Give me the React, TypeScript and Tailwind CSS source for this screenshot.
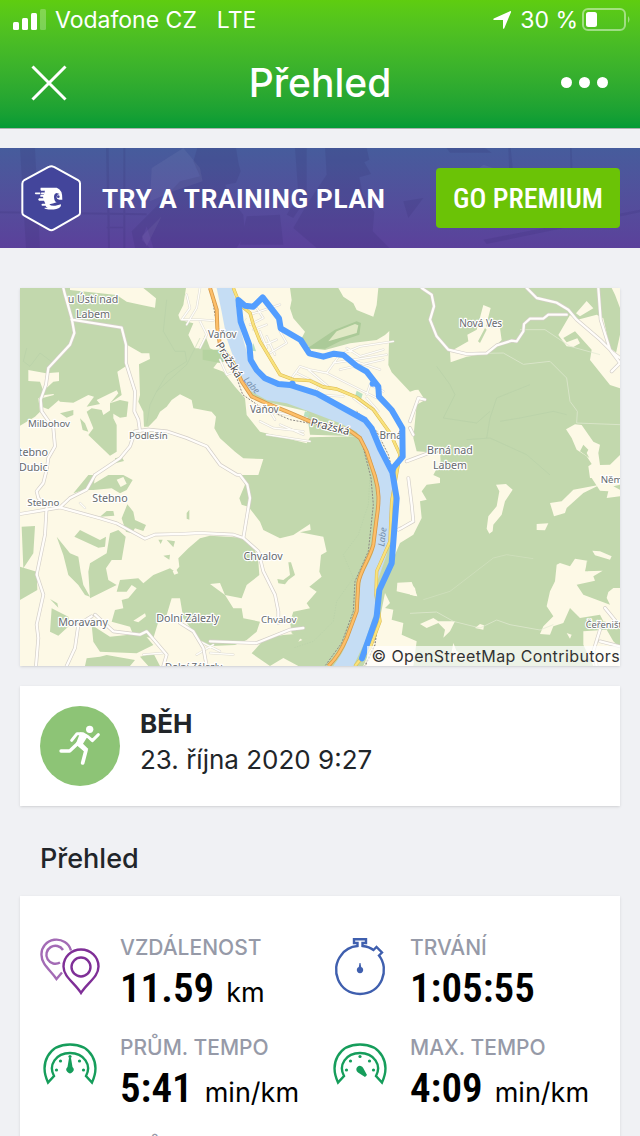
import type { ReactNode } from "react";

export default function App() {
  return (
    <div className="h-screen overflow-hidden bg-[#f0f1f4] font-['Inter',sans-serif] text-[#212529]">
      <Header></Header>
      <main className="pt-[19px]">
        <PremiumBanner></PremiumBanner>
        <div className="px-5 pt-10">
          <RouteMap></RouteMap>
          <ActivityInfo></ActivityInfo>
          <h2 className="px-5 pt-[34px] pb-[18px] text-[27px] leading-[38px] font-medium">Přehled</h2>
          <Stats></Stats>
        </div>
      </main>
    </div>
  );
}

function Header() {
  return (
    <header className="h-[129px] border-b border-[#a9b3ad] bg-linear-to-b from-[#5fcd10] to-[#039b35] text-white">
      <div className="flex h-10 items-center justify-between pr-2 pl-3 text-[23px] leading-10">
        <div className="flex items-center">
          <SignalIcon></SignalIcon>
          <span className="ml-2">Vodafone CZ</span>
          <span className="ml-5">LTE</span>
        </div>
        <div className="flex items-center">
          <LocationIcon></LocationIcon>
          <span className="ml-2">30 %</span>
          <BatteryIcon></BatteryIcon>
        </div>
      </div>
      <div className="grid h-[86px] grid-cols-[1fr_auto_1fr] items-center px-7">
        <button type="button" aria-label="Zavřít" className="justify-self-start">
          <svg width="42" height="42" viewBox="0 0 42 42" fill="none" stroke="white" strokeWidth="3">
            <path d="M4.500 4.500 37.500 37.500M37.500 4.500 4.500 37.500" />
          </svg>
        </button>
        <h1 className="text-[39px] leading-[48px] font-medium">Přehled</h1>
        <button type="button" aria-label="Další možnosti" className="justify-self-end">
          <svg width="54" height="42" viewBox="0 0 54 42" fill="white">
            <circle cx="8.500" cy="20.500" r="5.500" />
            <circle cx="26.500" cy="20.500" r="5.500" />
            <circle cx="44.500" cy="20.500" r="5.500" />
          </svg>
        </button>
      </div>
    </header>
  );
}

function SignalIcon() {
  return (
    <svg width="35" height="22" viewBox="0 0 35 22" fill="white">
      <rect x="1" y="13" width="6" height="8" rx="1.500" />
      <rect x="10" y="9" width="6" height="12" rx="1.500" />
      <rect x="19" y="4" width="6" height="17" rx="1.500" />
      <rect x="28" y="0" width="6" height="21" rx="1.500" opacity="0.250" />
    </svg>
  );
}

function LocationIcon() {
  return (
    <svg width="20" height="20" viewBox="0 0 20 20" fill="white">
      <path d="M18 1.200Q19.400 .8 19 2.200L12.300 18.200Q11.600 19.400 11 18.200V10H2.200Q.4 9.600 1.800 8.500Z" />
    </svg>
  );
}

function BatteryIcon() {
  return (
    <svg width="50" height="24" viewBox="0 0 50 24" className="ml-1">
      <rect x="1" y="1" width="42" height="21" rx="5" fill="none" stroke="white" strokeWidth="2" opacity="0.450" />
      <rect x="4" y="4" width="11" height="15" rx="2.500" fill="white" />
      <path d="M46 8v7q3-3.500 0-7Z" fill="white" opacity="0.450" />
    </svg>
  );
}

function PremiumBanner() {
  return (
    <section className="relative flex h-[100px] items-center justify-between overflow-hidden bg-linear-to-b from-[#465c9c] to-[#5b419b] px-5">
      <BannerBackground></BannerBackground>
      <div className="relative flex items-center gap-5">
        <HelmetLogo></HelmetLogo>
        <p className="pt-0.5 font-['Roboto',sans-serif] text-[26px] leading-8 font-bold tracking-wide whitespace-nowrap text-white">
          TRY A TRAINING PLAN
        </p>
      </div>
      <button
        type="button"
        className="relative h-[60px] w-[184px] rounded bg-[#6bc306] pt-0.5 font-['Roboto_Condensed','Roboto',sans-serif] text-[28px] leading-8 font-medium whitespace-nowrap text-white"
      >
        GO PREMIUM
      </button>
    </section>
  );
}

// faint runners and window frames behind the banner text
function BannerBackground() {
  return (
    <svg
      className="absolute inset-0 h-full w-full"
      viewBox="0 0 1920 300"
      preserveAspectRatio="none"
      fill="#28205f"
      aria-hidden="true"
    >
      <g opacity="0.120">
        <path d="M60 0h45l15 300H78ZM318 0h8l4 300h-6ZM370 0h6v300h-6Z" />
        <path d="M0 190 440 196V202L0 196ZM320 236h50v5h-50Z" />
        <path d="M592 0H708L716 48 722 70 708 104 676 110 690 150 730 200 735 260 710 300H460L440 235 425 275 450 300H405L395 250 470 175 540 100 600 85 580 40Z" />
        <path d="M740 205 840 200 850 290H720ZM885 0h35v150l-40 60-20-10 35-60Z" />
        <path d="M975 0h125l8 35-15 8 20 35-35 10 10 50 35 55-5 57 50 50H950l-70-60 40-70 60-90Z" />
        <path d="M1340 0h115l20 14h-125ZM1525 0h7l10 100-5 90h-5ZM1710 0h5l8 240h-7ZM1210 160l60-10-45 60ZM1450 275l470-90v8l-460 95Z" />
      </g>
      <g opacity="0.050" fill="#ffffff">
        <path d="M455 60 550 0 600 60 608 100 520 130 450 160ZM425 265l60-60-45 90ZM1320 150l130-100 60 20-10 70Z" />
      </g>
    </svg>
  );
}

function HelmetLogo() {
  return (
    <svg width="62" height="70" viewBox="60 68 186 210" fill="none">
      <path
        d="M146 80Q154 75 162 80L234 119Q240 123 240 129V218Q240 223 234 226L162 267Q154 272 146 267L73 226Q67 223 67 217V130Q67 123 73 119Z"
        fill="#43459b"
        stroke="white"
        strokeWidth="6"
      />
      <path
        fill="white"
        d="M122 142H170Q188 147 187 178H178Q169 176 170 169 171 162 179 161L170 158Q162 160 162 170 163 184 170 186 158 191 148 192 153 198 166 196L183 192Q184 203 169 206 153 209 138 206 131 205 134 202H143Q136 199 137 196H126Q122 191 128 190H136L132 181H117Q112 178 117 174H130L129 169H121V163H131L135 151H123Q120 147 122 142Z"
      />
      <path d="M107 159H119M125 159h6" stroke="white" strokeWidth="5" strokeLinecap="round" />
      <circle cx="175" cy="169" r="4" fill="#43459b" />
    </svg>
  );
}

const forest = "#c2d8ad";
const field = "#fdf9e6";

const route =
  "M456 1111 500 986 508 906 545 826 550 761 560 631 547 553 510 481 485 421 465 396 320 316 240 291 205 288 165 271 140 246 122 216 118 171 92 101 85 36 105 53 130 56 158 28 207 91 212 121 272 156 298 196 340 206 372 197 400 201 440 234 470 251 505 296 507 326 545 366 577 421 578 506 550 539 547 553";

const orangeRoad =
  "M570 0 590 65 592 120 600 170 640 225 665 280 695 325 740 346 800 370 870 400 985 425 1020 450 1040 490 1065 565C1078 610 1078 640 1070 690L1060 770C1050 810 1020 850 1015 885L1010 970 980 1050C965 1085 945 1115 925 1134";

const yellowRoad =
  "M640 0 660 50 690 75 700 110 720 160 780 260 820 275 870 278 910 297 950 303 1010 328 1060 365 1110 435 1140 500 1115 640 1110 760 1070 850 1068 920 1080 1000 1050 1080 1005 1134";

// every road is drawn twice, a wide casing and a narrower white core
const roads = [
  "M130 0 135 20 155 90 163 135 150 170 85 240 78 290 62 335 65 370 100 420 105 475 85 510 80 545 70 585 50 610 55 630 80 655 75 740 50 860 70 920 50 1010 55 1050 48 1134",
  "M155 95 305 119 318 170 318 225 345 310 343 370 355 395 360 430M225 561 300 511 330 475 345 430 385 425 440 430 500 450 560 475 600 530 650 560 660 561 682 590 690 630 670 750",
  "M0 678 120 658 240 691 290 706 375 752 405 740 480 738 540 735 640 740 670 750 715 790 730 850 765 920 775 970 775 1005",
  "M120 658 150 630 200 605 225 561M225 980 280 1030 360 1040 380 1030 440 1100 430 1134M215 985 175 1010 165 1080 140 1134M480 1005 520 1030 550 1080 560 1134M570 1060 710 1065 810 1025 850 1020",
  "M1205 0 1235 20 1242 55 1230 95 1250 145 1285 185 1340 198 1400 196 1430 172 1475 158 1490 160 1510 130 1512 108 1530 92 1570 92 1585 80 1640 80",
  "M1520 0 1550 30 1610 44 1645 65 1670 95 1740 155 1780 195 1800 210M1735 0 1742 95 1770 185 1800 225 1775 250",
  "M1160 520 1250 486M1165 570 1175 650 1180 700 1145 720 1135 725M1170 400 1195 330 1215 335M1180 440 1170 420",
  "M1755 960 1800 1015M1740 1025 1720 1090 1730 1134M1740 1060 1800 1075",
];

const streets =
  "M1120 160 1020 175 960 200 920 255 870 245 840 235 815 270M940 225 1100 200M960 245 1090 215M920 255 1010 300 1070 330M865 245 930 300M830 255 900 290 880 320 970 325M1000 330 1040 360M1040 330 1075 370M750 195 800 165 780 130M735 170 770 155M690 110 730 90 710 60M690 80 780 50M700 125 740 110M740 145 765 200M720 130 740 180M500 20 510 60 485 95 540 95 580 98M540 0 530 60 500 110M540 100 560 140 540 180M720 400 760 420 850 430M740 440 870 460M765 395 750 370 860 390M780 410 850 440M600 215 620 260 650 250M980 180 1020 205 1090 185M990 215 1080 245M1040 320 1050 290 1090 310M540 1060 600 1090M530 1100 580 1070M570 1095 640 1100M180 645 195 660M370 1100 430 1095";

function RouteMap() {
  return (
    <figure className="relative bg-white shadow">
      <svg
        viewBox="0 0 1800 1134"
        className="block w-full"
        role="img"
        aria-label="Mapa trasy"
        fontFamily="'Noto Sans', sans-serif"
      >
        <rect width="1800" height="1134" fill={forest} />
        <Fields></Fields>
        <Woods></Woods>

        <g fill="none" stroke="#b4cda6" strokeWidth="2" opacity="0.700">
          <path d="M440 35 430 130 465 190 495 190 500 220 440 260 410 310 390 350 380 410M20 180 10 220 30 235 60 195 100 225M540 150 500 230 410 310" />
          <path d="M1050 560 1045 650 1015 740 970 800 1000 870 950 940 940 1000 880 1060 820 1080" strokeDasharray="4 4" />
          <path d="M1250 235 1290 290 1305 320 1270 390 1370 405 1410 370M1400 450 1410 390 1430 330 1530 290M1440 400 1500 390 1600 370 1640 380M1340 455 1410 450 1520 500 1590 561" />
        </g>
        <g fill="none" stroke="#e3ebd4" strokeWidth="3" opacity="0.700">
          <path d="M1340 197 1450 195 1510 229 1590 220 1640 270 1650 340 1672 370 1670 405 1800 410M1500 125 1575 125 1650 175 1740 200" />
          <path d="M1170 976 1250 972 1300 1000 1380 1020 1430 996 1470 1010 1560 1026 1600 1010M680 90 650 130 640 170" />
          <path d="M1210 935 1290 910 1420 810 1460 800 1540 812" opacity="0.500" />
        </g>

        <path d="M860 182 945 125 1010 100 1023 105 1018 140 960 160 915 182Z" fill="#abca98" />
        <path d="M925 160 950 130 1005 108 1015 112 1010 135Z" fill="#dfe8c4" />
        <path d="M548 185 600 185 625 215 600 225 548 215Z" fill="#b5d3a0" />
        <path d="M1010 308 1028 318 1022 338 1005 325ZM700 165l8 25-12-2ZM855 370l14 5-8 20-12-3Z" fill="#b7e0c0" />

        <g fill="none" strokeLinejoin="round" strokeLinecap="round">
          <path d={streets} stroke="#dedbd2" strokeWidth="7" />
          <path d={streets} stroke="#fffefa" strokeWidth="4" />
          {roads.map((d) => (
            <path key={d} d={d} stroke="#d4cfc8" strokeWidth="11" />
          ))}
          {roads.map((d) => (
            <path key={d} d={d} stroke="#fffdfa" strokeWidth="7" />
          ))}
        </g>

        <path
          d="M590 0 605 71 620 151 645 221 665 281 695 311 740 336 800 346 870 371 960 406 1010 431 1035 471 1070 561C1082 620 1078 650 1075 691L1060 791C1050 825 1028 850 1022 875L1015 961 985 1051C975 1085 955 1115 940 1134H1000L1035 1061 1068 961 1068 891 1100 801 1115 711 1122 611 1120 561 1080 471 1040 391 890 316 810 291 740 276 700 241 680 191 655 101 648 51 640 0Z"
          fill="#c5ddf4"
        />
        <g fill="none" strokeLinejoin="round">
          <path
            d="M572 0 588 100 600 180 640 240 668 320 720 356 810 395 920 415 995 435 1025 460 1053 570 1060 650 1045 790 1005 880 1000 970 965 1065 915 1134"
            stroke="#8d8984"
            strokeWidth="3"
            strokeDasharray="6 4"
          />
          <path d="M1010 370 1070 430 1105 500 1120 560" stroke="#8d8984" strokeWidth="3" strokeDasharray="6 4" />
          <path d="M1073 1000 1065 1070 1035 1134" stroke="#8d8984" strokeWidth="4" strokeDasharray="6 4" />
          <path d={orangeRoad} stroke="#d69a4a" strokeWidth="12" />
          <path d={orangeRoad} stroke="#fdbf69" strokeWidth="7" />
          <path d={yellowRoad} stroke="#dbb94f" strokeWidth="10" />
          <path d={yellowRoad} stroke="#f9e27d" strokeWidth="7" />
        </g>

        <g
          fill="#666a6d"
          stroke="#ffffff"
          strokeWidth="7"
          strokeLinejoin="round"
          paintOrder="stroke"
          fontSize="32"
          textAnchor="middle"
        >
          <text x="219" y="44">u Ústí nad</text>
          <text x="219" y="90">Labem</text>
          <text x="87" y="418" fontSize="29">Milbohov</text>
          <text x="385" y="452" fontSize="29">Podlešín</text>
          <text x="40" y="505">tebno</text>
          <text x="40" y="550">Dubic</text>
          <text x="70" y="655" fontSize="29">Stebno</text>
          <text x="270" y="641">Stebno</text>
          <text x="189" y="1013">Moravany</text>
          <text x="503" y="1003">Dolní Zálezly</text>
          <text x="521" y="1145" fontSize="29">Dolní Zálezly</text>
          <text x="729" y="815">Chvalov</text>
          <text x="776" y="1004" fontSize="29">Chvalov</text>
          <text x="607" y="150" fontSize="30">Vaňov</text>
          <text x="733" y="375" fontSize="30">Vaňov</text>
          <text x="1382" y="116" fontSize="30">Nová Ves</text>
          <text x="1290" y="497">Brná nad</text>
          <text x="1290" y="542">Labem</text>
          <text x="1112" y="452" fontSize="30">Brná</text>
          <text x="1742" y="584" textAnchor="start" fontSize="29">Něm</text>
          <text x="1697" y="1021" textAnchor="start" fontSize="28">Čeřeništ</text>
          <g fill="#4f4f4f" fontSize="33">
            <text transform="translate(618 222) rotate(58)">Pražská</text>
            <text transform="translate(928 427) rotate(14)">Pražská</text>
          </g>
          <g fill="#7790ae" stroke="none" fontSize="27" fontStyle="italic">
            <text transform="translate(688 298) rotate(48)">Labe</text>
            <text transform="translate(1096 748) rotate(-83)">Labe</text>
          </g>
        </g>

        <g transform="translate(570 0)">
          <path
            d={route}
            fill="none"
            stroke="#539eff"
            strokeWidth="18"
            strokeLinejoin="round"
            strokeLinecap="round"
          />
          <circle cx="247" cy="288" r="10" fill="#539eff" />
          <circle cx="488" cy="287" r="9" fill="#539eff" />
        </g>
      </svg>
      <figcaption className="absolute right-0 bottom-0 bg-white/70 pl-1 text-base leading-5 tracking-wide whitespace-nowrap text-[#333333]">
        © OpenStreetMap Contributors
      </figcaption>
    </figure>
  );
}

function Fields() {
  return (
    <g fill={field}>
      <path d="M150 0H370L408 31 405 59 365 51 320 41 290 21 150 6Z" />
      <path d="M25 246 78 256 117 253V279L100 281 70 309 60 281 25 279Z" />
      <path d="M0 413 45 386 60 371 55 331 75 321 100 318 120 341 160 344 205 321 222 326 200 356 240 348 230 336 290 307 295 316 270 346 305 321 292 251 315 236 318 169 365 196 388 196 390 213 357 229 360 321 355 341 370 371 372 416 385 416 410 391 420 371 440 356 455 336 480 319 515 336 520 361 575 371 588 386 583 421 600 451 645 491 670 511 730 513 715 561H665L675 590 658 631 665 650 685 656 720 701 730 726 780 751 820 741 870 708 872 726 840 733 910 746 920 791 903 801 898 851 905 866 868 896 890 911 860 946 870 961 820 971 810 1001 815 1036 870 1070 830 1080 835 1110 870 1134H0Z" />
      <path d="M498 0H810L815 36 810 61 820 91 855 131 845 151 870 181 915 186 990 166 1070 156 1095 141 1108 129 1105 231 1115 253 1170 311 1185 306 1195 305 1215 336 1190 350 1180 450 1190 490 1260 495 1262 520 1240 561 1260 570V585L1220 590 1205 610 1220 635 1200 640 1205 690 1180 740 1140 765 1125 800 1120 640 1115 561 1080 471 1040 391 890 316 740 276 700 241 690 330 860 370 870 440 1010 445 870 448 860 466 720 431 680 381 675 331 645 296 610 251 580 240 610 200 570 181 555 141 540 181 525 181 505 141 520 106 480 96 475 81 490 51Z" />
      <path d="M955 0H1075L1070 51 1060 86 1010 66 1000 46 970 26Z" />
      <path d="M1290 191 1345 160 1342 140 1370 125 1390 51 1412 60 1398 115 1440 121 1445 156 1405 196 1340 206 1292 223Z" />
      <path d="M1668 76 1700 39 1720 61 1680 85ZM1615 141 1650 81 1670 96 1730 80 1750 91 1770 181 1800 201V301L1770 291 1710 216 1715 185 1665 130 1630 150 1640 163 1672 151 1680 166 1660 177 1640 175ZM1775 0H1800V60L1785 20ZM1788 195 1800 140V210Z" />
      <path d="M1638 424 1665 409 1685 411 1720 461 1740 470 1735 495 1740 531 1770 530 1800 501V570H1710L1705 535 1715 528 1700 505 1670 485 1655 450Z" />
      <path d="M1428 590 1458 588 1478 605 1455 640 1445 680 1420 710 1418 730 1408 737 1400 722 1405 685 1430 655 1438 610Z" />
      <path d="M1590 645 1625 640 1660 605 1740 590 1690 615 1640 660 1635 675 1602 685ZM1550 708 1585 706 1575 727 1550 726ZM1715 570 1800 561V590L1780 595 1800 605V625L1760 630 1765 610 1740 608Z" />
      <path d="M1717 788 1740 790 1775 805 1770 815 1725 802ZM1610 830 1620 825 1650 835 1665 812 1702 818 1695 850 1748 848 1720 865 1725 878 1670 890 1690 920 1730 935 1770 950 1760 930 1765 912 1780 900 1800 900V1010L1750 1000 1740 980 1680 990 1650 960 1630 1005 1600 1015 1590 1040 1560 1038 1570 1015 1600 985 1580 955 1590 910 1605 880Z" />
      <path d="M1200 1008 1240 990 1255 1000 1305 1000 1290 1030 1270 1049 1275 1025 1255 1005 1220 1020ZM1365 1020 1380 1008 1392 1012 1390 1025ZM1640 1035 1655 1040 1650 1052ZM1690 1030 1760 1025 1780 1060 1800 1080V1134H1720L1690 1070ZM1300 1065l10 25 40 20-60 5ZM1170 885l15 15 5 25-20-5Z" />
      <path d="M1095 915 1110 945 1095 960 1120 965 1115 995 1150 1005 1145 1040 1190 1060 1180 1134H1030L1070 1040ZM1132 884 1175 882 1192 925 1130 910Z" />
    </g>
  );
}

function Woods() {
  return (
    <g fill={forest}>
      <path d="M65 331 110 319 117 336 85 364 65 356ZM120 376 160 366 160 381 140 389ZM180 391 195 406 205 431 188 426ZM270 346 300 336 325 341 320 386 300 389 270 371Z" />
      <path d="M200 371 215 361 245 366 250 381 280 361V391L290 411V491L270 503 205 441 220 421ZM285 511 305 506 312 519 285 526Z" />
      <path d="M160 616 205 561H225L220 606 190 606ZM215 591 265 561H310L338 576 320 606 300 616 275 601 220 606ZM240 686 260 669H280L283 683ZM322 649 340 671 345 696 378 711 370 729 345 721 335 736 318 731 305 691Z" />
      <path d="M163 746 180 726 240 756 258 746 255 776 235 779ZM110 746 150 796 175 806 182 851 190 891 210 926 195 921 175 891 145 861 130 801ZM5 716 45 714 40 796 10 841ZM0 836 50 851 52 906 0 936ZM90 933 112 946 115 959Z" />
      <path d="M270 736 295 726 317 746 305 816H275L258 841 265 876 290 891 210 931 205 851 210 826 260 796ZM95 961 145 986 150 1011 115 1043 90 1031Z" />
      <path d="M570 743 670 749 700 771 715 821 718 861 680 891 665 931 615 921 640 961 665 961 670 991 720 1001 710 1031 680 1056 645 1071 560 1075 530 1051 520 1031 490 991 480 931H455L440 981 415 1001 400 1051 340 1041 330 1016 275 1001 285 966 310 961 305 936 325 931 350 901 335 891 320 911 290 911 300 876 355 871 370 886 400 861 450 841 465 851 478 836 475 811 505 781 540 751Z" />
      <path d="M215 1011 270 1046 370 1036 400 1071 350 1096 240 1091 220 1061ZM200 1111 240 1106 260 1101 345 1116 330 1134H195ZM360 1106 400 1096 420 1134H385Z" />
      <path d="M415 755 428 755 422 768ZM440 756 465 760 460 778ZM430 803 450 800 448 815ZM500 675l8-10v30l-8-3Z" />
      <path d="M805 823 813 823 825 861 805 876 795 889 775 886 772 873 790 876 810 861Z" />
      <path d="M695 1096 735 1051 790 1041 850 1036 835 1061 870 1046 960 1071 965 1091 930 1134H835L790 1110 750 1134Z" />
      <path d="M1690 470 1705 485 1700 495 1708 510 1680 490ZM1374 160 1395 120 1400 125 1380 165ZM1700 820 1735 845 1700 850ZM1700 1000 1800 1010V1025L1740 1020Z" />
      <path fill={field} d="M340 998 375 976 378 985 355 1003ZM570 888 600 885 615 921ZM290 575l20-8 10 20-18 10ZM458 850l12-4 5 10-12 4Z" />
    </g>
  );
}

function ActivityInfo() {
  return (
    <section className="mt-5 flex h-[120px] items-center gap-5 bg-white px-5 shadow">
      <div className="flex size-20 items-center justify-center rounded-full bg-[#8dc476]">
        <svg width="42" height="42" viewBox="118 122 126 126" fill="none" stroke="white">
          <circle cx="210" cy="135" r="11" fill="white" stroke="none" />
          <path
            d="M156 168 172 148H190L206 158 218 169 236 151"
            strokeWidth="9"
            strokeLinecap="round"
            strokeLinejoin="round"
          />
          <path d="M182 144 206 153 190 178 206 194 196 204 168 180Z" fill="white" stroke="none" />
          <path d="M124 200H150L178 174" strokeWidth="10" strokeLinecap="round" strokeLinejoin="round" />
          <path d="M176 178 199 198 189 236" strokeWidth="11" strokeLinecap="round" strokeLinejoin="round" />
        </svg>
      </div>
      <div className="pb-2 text-[26px] leading-9">
        <p className="font-bold">BĚH</p>
        <p>23. října 2020 9:27</p>
      </div>
    </section>
  );
}

function Stats() {
  return (
    <dl className="grid grid-cols-2 bg-white pt-9 pl-5 shadow">
      <Stat icon={<PinsIcon></PinsIcon>} label="VZDÁLENOST" value="11.59" unit="km"></Stat>
      <Stat icon={<StopwatchIcon></StopwatchIcon>} label="TRVÁNÍ" value="1:05:55"></Stat>
      <Stat
        icon={<GaugeIcon needle="M29 22H31L32.500 31A3.600 3.600 0 1 1 27.500 31Z"></GaugeIcon>}
        label="PRŮM. TEMPO"
        value="5:41"
        unit="min/km"
      ></Stat>
      <Stat
        icon={<GaugeIcon needle="M37 39 35 41 28 36.500A3.600 3.600 0 1 1 33.200 32Z"></GaugeIcon>}
        label="MAX. TEMPO"
        value="4:09"
        unit="min/km"
      ></Stat>
      <Stat label="PRŮM."></Stat>
    </dl>
  );
}

interface StatProps {
  icon?: ReactNode;
  label: string;
  value?: string;
  unit?: string;
}

function Stat({ icon, label, value, unit }: StatProps) {
  return (
    <div className="flex h-[100px] gap-5">
      <div className="w-[60px] shrink-0 pt-1">{icon}</div>
      <div>
        <dt className="text-[21px] leading-8 font-medium whitespace-nowrap text-[#969aa8]">{label}</dt>
        <dd className="flex items-baseline gap-3 text-black">
          <span className="font-['Roboto_Condensed','Roboto',sans-serif] text-[41px] leading-[48px] font-semibold">
            {value}
          </span>
          <span className="text-[27px]">{unit}</span>
        </dd>
      </div>
    </div>
  );
}

function PinsIcon() {
  return (
    <svg width="60" height="60" viewBox="0 0 60 60" fill="none" strokeWidth="2.400">
      <g stroke="#a36bb5">
        <path d="M31 14.500A15 14.500 0 0 0 1.500 19C1.500 28.500 11 34.500 16.500 43L22 36.500" />
        <path d="M23 14A9 9 0 1 0 20 26.500" />
      </g>
      <g stroke="#7f2f97">
        <path d="M41 57C35 47 23.500 41 23.500 30.500A17.500 17 0 0 1 58.500 30.500C58.500 41 47 47 41 57Z" />
        <circle cx="41" cy="31" r="9.500" />
      </g>
    </svg>
  );
}

function StopwatchIcon() {
  return (
    <svg width="60" height="60" viewBox="0 0 60 60" fill="none" stroke="#3f5fae" strokeWidth="2.400">
      <path d="M27.500 10V7H24V3.200H36V7H32.500V10C37 10.500 41 12 43.500 14L46.500 11 52 16.500 49 19.500C60 33 52 58 30 58S0 33 11 19.500C15 13.500 21 10.500 27.500 10Z" />
      <path d="M29.500 27H30.500L31.200 31A3.200 3.200 0 1 1 28.800 31Z" fill="#3f5fae" stroke="none" />
    </svg>
  );
}

function GaugeIcon({ needle }: { needle: string }) {
  return (
    <svg width="60" height="60" viewBox="0 0 60 60" fill="none">
      <path
        d="M8 46.500C-1 27 9 8.500 30 8.500S61 27 52 46.500L46 40C52 29 44 17 30 17S8 29 14 40Z"
        stroke="#169d5b"
        strokeWidth="2.400"
      />
      <g fill="#169d5b">
        <path d={needle} />
        <circle cx="16.500" cy="34" r="1.600" />
        <circle cx="20.500" cy="25" r="1.600" />
        <circle cx="30" cy="20.500" r="1.600" />
        <circle cx="39.500" cy="25" r="1.600" />
        <circle cx="43.500" cy="34" r="1.600" />
      </g>
    </svg>
  );
}
